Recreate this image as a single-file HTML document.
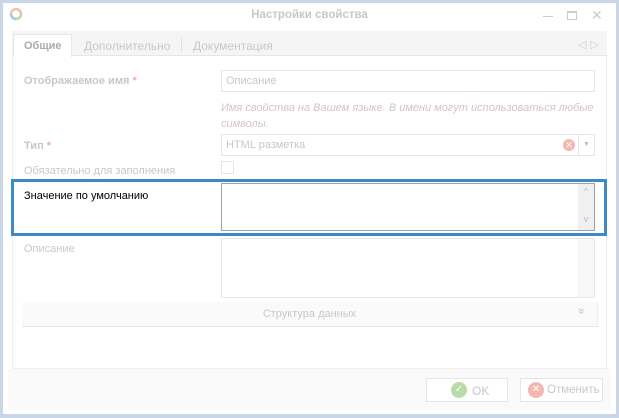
<!DOCTYPE html>
<html><head><meta charset="utf-8"><style>
*{box-sizing:border-box;margin:0;padding:0}
body{width:619px;height:418px;background:#c8d6e8;font-family:"Liberation Sans","DejaVu Sans",sans-serif;font-size:11px;position:relative;overflow:hidden}
.a{position:absolute}
.win{left:3px;top:3px;width:613px;height:411px;background:#fff}
.lbl{color:#c8c8c8;font-size:11px}
.inp{border:1px solid #e6e6e6;background:#fff}
</style></head><body>
<div class="a win"></div>
<svg class="a" style="left:9px;top:7px" width="14" height="14" viewBox="0 0 14 14"><circle cx="7" cy="7" r="5" fill="none" stroke="#f2c0a8" stroke-width="2.5"/><path d="M7 12 A5 5 0 0 1 2 7" fill="none" stroke="#a8c8e8" stroke-width="2.5"/><path d="M12 7 A5 5 0 0 1 7 12" fill="none" stroke="#b8dca8" stroke-width="2.5"/></svg>
<div class="a" style="left:0;width:619px;top:9px;text-align:center;color:#c8c8c8;font-weight:bold;font-size:11.5px">Настройки свойства</div>
<div class="a" style="left:543px;top:16px;width:10px;height:1px;background:#ccc"></div>
<div class="a" style="left:567px;top:11px;width:10px;height:9px;border:1px solid #ccc;border-top-width:2px"></div>
<div class="a" style="left:591px;top:7px;color:#ccc;font-size:14px">✕</div>
<div class="a" style="left:12px;top:31px;width:595px;height:338px;border:1px solid #eee"></div>
<div class="a" style="left:12px;top:31px;width:595px;height:25px;background:#f5f5f5;border-bottom:1px solid #e6e6e6"></div>
<div class="a" style="left:13px;top:34px;width:59px;height:23px;background:#fff;border:1px solid #e6e6e6;border-bottom:none;color:#aaa;font-weight:bold;padding:5px 0 0 10px">Общие</div>
<div class="a" style="left:84px;top:39px;color:#c8c8c8;font-size:12px">Дополнительно</div>
<div class="a" style="left:181px;top:38px;width:1px;height:14px;background:#e0e0e0"></div>
<div class="a" style="left:193px;top:39px;color:#c8c8c8;font-size:12px">Документация</div>
<div class="a" style="left:578px;top:38px;color:#ccc;font-size:11px;letter-spacing:4px">◁▷</div>
<div class="a lbl" style="left:24px;top:75px;font-weight:bold">Отображаемое имя <span style="color:#f0b0a0">*</span></div>
<div class="a inp" style="left:221px;top:70px;width:374px;height:22px;color:#c8c8c8;padding:4px 0 0 4px">Описание</div>
<div class="a" style="left:221px;top:100px;color:#d4c4c4;font-style:italic;font-size:11px;line-height:16px;width:380px">Имя свойства на Вашем языке. В имени могут использоваться любые символы.</div>
<div class="a lbl" style="left:24px;top:140px;font-weight:bold">Тип <span style="color:#f0b0a0">*</span></div>
<div class="a inp" style="left:221px;top:134px;width:374px;height:22px;color:#c8c8c8;padding:4px 0 0 4px">HTML разметка</div>
<div class="a" style="left:563px;top:139px;width:12px;height:12px;border-radius:50%;background:#f4b8b0;color:#fff;font-size:9px;text-align:center;line-height:12px">✕</div>
<div class="a" style="left:578px;top:135px;width:16px;height:20px;border-left:1px solid #e6e6e6;color:#bbb;font-size:7px;text-align:center;line-height:20px">▼</div>
<div class="a lbl" style="left:24px;top:165px">Обязательно для заполнения</div>
<div class="a inp" style="left:221px;top:161px;width:13px;height:13px"></div>
<div class="a" style="left:11px;top:179px;width:596px;height:57px;border:3px solid #3d8ac8"></div>
<div class="a" style="left:24px;top:190px;color:#000">Значение по умолчанию</div>
<div class="a" style="left:221px;top:183px;width:374px;height:48px;border:1px solid #a0a0a0;background:#fff"></div>
<div class="a" style="left:578px;top:184px;width:16px;height:46px;background:#f0f0f0;color:#bbb;font-size:9px;text-align:center;line-height:14px">^<br><br>v</div>
<div class="a lbl" style="left:24px;top:243px">Описание</div>
<div class="a inp" style="left:221px;top:238px;width:374px;height:60px"></div>
<div class="a" style="left:578px;top:239px;width:16px;height:58px;background:#f8f8f8"></div>
<div class="a" style="left:22px;top:302px;width:576px;height:25px;background:#fafafa;border-bottom:1px solid #e6e6e6;border-right:1px solid #eee;color:#c8c8c8;text-align:center;padding-top:6px">Структура данных</div>
<div class="a" style="left:578px;top:305px;color:#bbb;font-size:11px;transform:rotate(90deg)">»</div>
<div class="a" style="left:8px;top:369px;width:603px;height:41px;background:#fafafa"></div>
<div class="a" style="left:426px;top:378px;width:82px;height:24px;border:1px solid #e6e6e6;background:#fff"></div>
<div class="a" style="left:451px;top:382px;width:16px;height:16px;border-radius:50%;background:#b8dca8;color:#fff;font-size:10px;text-align:center;line-height:16px">✓</div>
<div class="a" style="left:472px;top:384px;color:#c8c8c8;font-size:12px">OK</div>
<div class="a" style="left:520px;top:378px;width:83px;height:24px;border:1px solid #e6e6e6;background:#fff"></div>
<div class="a" style="left:528px;top:382px;width:16px;height:16px;border-radius:50%;background:#f4b8b0;color:#fff;font-size:10px;text-align:center;line-height:16px">✕</div>
<div class="a" style="left:547px;top:384px;color:#c8c8c8;font-size:11.5px">Отменить</div>
</body></html>
